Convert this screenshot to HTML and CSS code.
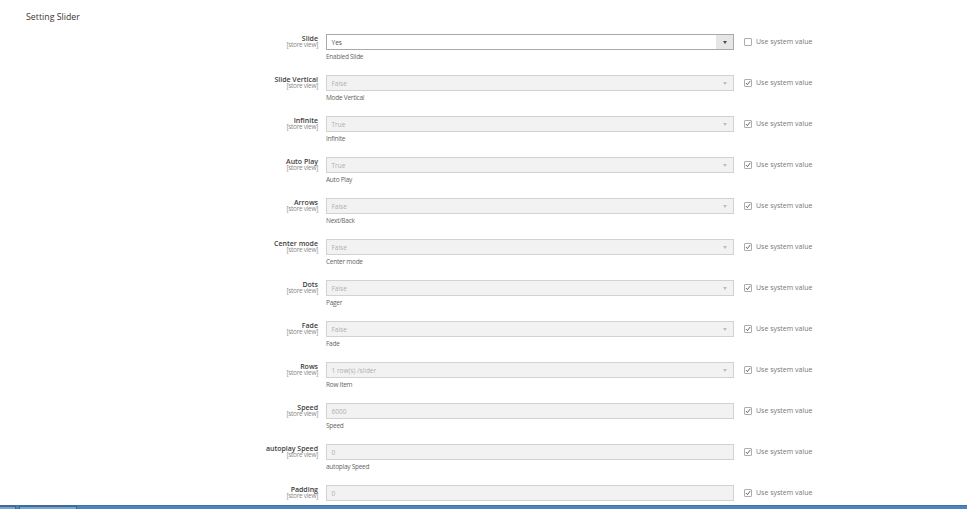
FILE: index.html
```html
<!DOCTYPE html>
<html>
<head>
    <title>Setting Slider</title>
    <link rel="stylesheet" href="styles.css">
</head>
<body>
    <div class="page">
        <div class="content">
            <h2 class="section-title">Setting Slider</h2>

            <div class="row">
                <div class="label"><b>Slide</b><span>[store view]</span></div>
                <div class="control">
                    <div class="select active">Yes<i class="arrow"></i></div>
                    <p class="hint">Enabled Slide</p>
                </div>
                <label class="system"><span class="check"></span>Use system value</label>
            </div>

            <div class="row">
                <div class="label"><b>Slide Vertical</b><span>[store view]</span></div>
                <div class="control">
                    <div class="select">False<i class="arrow"></i></div>
                    <p class="hint">Mode Vertical</p>
                </div>
                <label class="system"><span class="check"><svg viewBox="0 0 8 8"><path d="M1.2 4l2 2.2 3.8-5"/></svg></span>Use system value</label>
            </div>

            <div class="row">
                <div class="label"><b>Infinite</b><span>[store view]</span></div>
                <div class="control">
                    <div class="select">True<i class="arrow"></i></div>
                    <p class="hint">Infinite</p>
                </div>
                <label class="system"><span class="check"><svg viewBox="0 0 8 8"><path d="M1.2 4l2 2.2 3.8-5"/></svg></span>Use system value</label>
            </div>

            <div class="row">
                <div class="label"><b>Auto Play</b><span>[store view]</span></div>
                <div class="control">
                    <div class="select">True<i class="arrow"></i></div>
                    <p class="hint">Auto Play</p>
                </div>
                <label class="system"><span class="check"><svg viewBox="0 0 8 8"><path d="M1.2 4l2 2.2 3.8-5"/></svg></span>Use system value</label>
            </div>

            <div class="row">
                <div class="label"><b>Arrows</b><span>[store view]</span></div>
                <div class="control">
                    <div class="select">False<i class="arrow"></i></div>
                    <p class="hint">Next/Back</p>
                </div>
                <label class="system"><span class="check"><svg viewBox="0 0 8 8"><path d="M1.2 4l2 2.2 3.8-5"/></svg></span>Use system value</label>
            </div>

            <div class="row">
                <div class="label"><b>Center mode</b><span>[store view]</span></div>
                <div class="control">
                    <div class="select">False<i class="arrow"></i></div>
                    <p class="hint">Center mode</p>
                </div>
                <label class="system"><span class="check"><svg viewBox="0 0 8 8"><path d="M1.2 4l2 2.2 3.8-5"/></svg></span>Use system value</label>
            </div>

            <div class="row">
                <div class="label"><b>Dots</b><span>[store view]</span></div>
                <div class="control">
                    <div class="select">False<i class="arrow"></i></div>
                    <p class="hint">Pager</p>
                </div>
                <label class="system"><span class="check"><svg viewBox="0 0 8 8"><path d="M1.2 4l2 2.2 3.8-5"/></svg></span>Use system value</label>
            </div>

            <div class="row">
                <div class="label"><b>Fade</b><span>[store view]</span></div>
                <div class="control">
                    <div class="select">False<i class="arrow"></i></div>
                    <p class="hint">Fade</p>
                </div>
                <label class="system"><span class="check"><svg viewBox="0 0 8 8"><path d="M1.2 4l2 2.2 3.8-5"/></svg></span>Use system value</label>
            </div>

            <div class="row">
                <div class="label"><b>Rows</b><span>[store view]</span></div>
                <div class="control">
                    <div class="select">1 row(s) /slider<i class="arrow"></i></div>
                    <p class="hint">Row Item</p>
                </div>
                <label class="system"><span class="check"><svg viewBox="0 0 8 8"><path d="M1.2 4l2 2.2 3.8-5"/></svg></span>Use system value</label>
            </div>

            <div class="row">
                <div class="label"><b>Speed</b><span>[store view]</span></div>
                <div class="control">
                    <div class="select">6000</div>
                    <p class="hint">Speed</p>
                </div>
                <label class="system"><span class="check"><svg viewBox="0 0 8 8"><path d="M1.2 4l2 2.2 3.8-5"/></svg></span>Use system value</label>
            </div>

            <div class="row">
                <div class="label"><b>autoplay Speed</b><span>[store view]</span></div>
                <div class="control">
                    <div class="select">0</div>
                    <p class="hint">autoplay Speed</p>
                </div>
                <label class="system"><span class="check"><svg viewBox="0 0 8 8"><path d="M1.2 4l2 2.2 3.8-5"/></svg></span>Use system value</label>
            </div>

            <div class="row">
                <div class="label"><b>Padding</b><span>[store view]</span></div>
                <div class="control">
                    <div class="select">0</div>
                </div>
                <label class="system"><span class="check"><svg viewBox="0 0 8 8"><path d="M1.2 4l2 2.2 3.8-5"/></svg></span>Use system value</label>
            </div>
        </div>

        <div class="taskbar">
            <div class="task small"></div>
            <div class="task"></div>
        </div>
    </div>
</body>
</html>
```

FILE: styles.css
```css
html, body {
    height: 100%;
}
body {
    margin: 0;
    font-family: "Open Sans", sans-serif;
    color: #41362f;
    background-color: #fff;
}
.page {
    height: 509px;
    display: flex;
    flex-direction: column;
    overflow: hidden;
}
.content {
    flex: 1;
    min-height: 0;
    overflow: hidden;
}
.section-title {
    margin: 0;
    padding: 11px 0 0 26px;
    height: 34px;
    box-sizing: border-box;
    font-size: 8.8px;
    line-height: 13px;
    font-weight: 400;
    color: #41362f;
}
.row {
    display: flex;
    align-items: flex-start;
    height: 41px;
}
.label {
    width: 318px;
    flex: none;
    text-align: right;
    padding-top: 1px;
}
.label b {
    display: block;
    font-size: 7px;
    line-height: 8px;
    font-weight: 600;
    color: #3d3d3d;
}
.label span {
    display: block;
    margin-top: -1px;
    font-size: 6.5px;
    line-height: 6px;
    letter-spacing: -0.3px;
    color: #8a8a8a;
}
.control {
    width: 408px;
    margin-left: 8px;
    flex: none;
}
.select {
    position: relative;
    height: 16px;
    box-sizing: border-box;
    border: 1px solid #d2d2d2;
    background-color: #f2f2f2;
    padding-left: 4.5px;
    font-size: 6.5px;
    line-height: 15px;
    color: #b0b0b0;
}
.select.active {
    border-color: #a9a9a9;
    background-color: #fff;
    color: #4d4d4d;
}
.select.active::after {
    content: "";
    position: absolute;
    top: 0;
    right: 0;
    bottom: 0;
    width: 17px;
    background-color: #e6e6e6;
}
.arrow {
    position: absolute;
    z-index: 1;
    top: 6px;
    right: 6px;
    border-top: 3px solid #bdbdbd;
    border-left: 2px solid transparent;
    border-right: 2px solid transparent;
}
.active .arrow {
    border-top-color: #514943;
}
.hint {
    margin: 2px 0 0;
    font-size: 6.5px;
    line-height: 9px;
    letter-spacing: -0.26px;
    color: #666;
}
.system {
    display: flex;
    align-items: center;
    margin-left: 10px;
    height: 15px;
    font-size: 7px;
    color: #777;
}
.check {
    width: 8px;
    height: 8px;
    box-sizing: border-box;
    border: 1px solid #adadad;
    border-radius: 1px;
    margin-right: 4px;
    background-color: #fff;
}
.check svg {
    display: block;
    width: 6px;
    height: 6px;
    fill: none;
    stroke: #41362f;
    stroke-width: 1;
}
.taskbar {
    flex: none;
    height: 4px;
    display: flex;
    gap: 3px;
    background-color: #4a86bd;
    border-top: 1px solid #41719f;
    box-sizing: border-box;
}
.task {
    width: 58px;
    background-color: #7ba6d0;
    border: 1px solid #3f6790;
    border-bottom: none;
    box-sizing: border-box;
}
.task.small {
    width: 16px;
    border-left: none;
}
```
